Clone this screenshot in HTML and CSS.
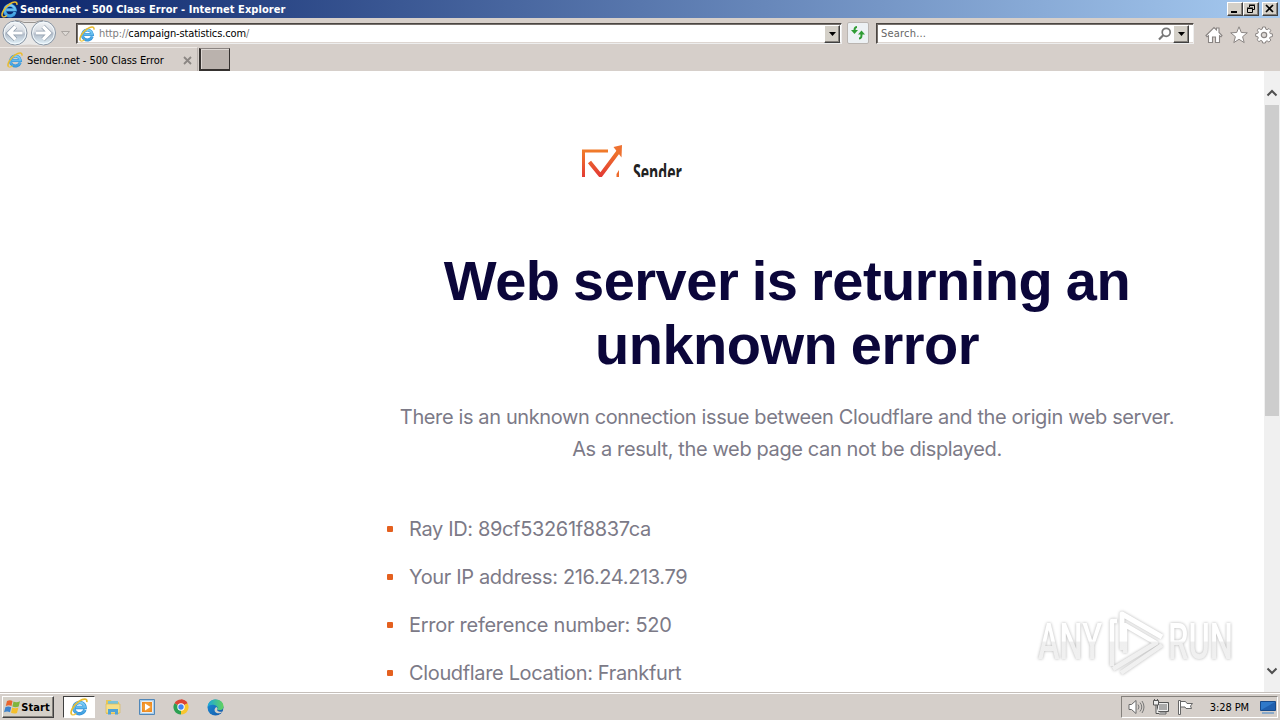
FILE: index.html
```html
<!DOCTYPE html>
<html lang="en">
<head>
<meta charset="utf-8">
<title>Sender.net - 500 Class Error</title>
<link rel="stylesheet" href="styles.css">
</head>
<body>
<svg class="defs" width="0" height="0">
  <defs>
    <linearGradient id="blue" x1="0" y1="0" x2="0" y2="1"><stop offset="0" stop-color="#7fd0f7"/><stop offset="1" stop-color="#3f9fe0"/></linearGradient>
    <linearGradient id="orb" x1="0" y1="0" x2="0" y2="1"><stop offset="0" stop-color="#f4f5f7"/><stop offset=".45" stop-color="#d5dae1"/><stop offset=".55" stop-color="#b3bdca"/><stop offset="1" stop-color="#e6f6fd"/></linearGradient>
    <linearGradient id="sender" x1="0" y1="0" x2="0" y2="1"><stop offset="0" stop-color="#f07a2a"/><stop offset="1" stop-color="#e33b34"/></linearGradient>
    <linearGradient id="edge" x1="0" y1="0" x2="1" y2="1"><stop offset="0" stop-color="#1b8fd8"/><stop offset="1" stop-color="#1557a8"/></linearGradient>
    <linearGradient id="edgeTop" x1="0" y1="0" x2="1" y2="0"><stop offset="0" stop-color="#1aa7dd"/><stop offset="1" stop-color="#62d35c"/></linearGradient>
    <linearGradient id="mark" gradientUnits="userSpaceOnUse" x1="0" y1="6" x2="0" y2="66"><stop offset="0" stop-color="#fff"/><stop offset=".5" stop-color="#fff"/><stop offset=".52" stop-color="#efefef"/><stop offset="1" stop-color="#f1f1f1"/></linearGradient>
    <symbol id="ie" viewBox="0 0 16 16">
      <path d="M13.2 10.5A5 5 0 1 1 13.4 8.4H5" fill="none" stroke="#3390d6" stroke-width="3"/>
      <path d="M13.2 10.5A5 5 0 1 1 13.4 8.4H5" fill="none" stroke="url(#blue)" stroke-width="2"/>
      <path d="M1.6 14.8C-.6 12.4 3.4 6 8.2 2.8 11.8.4 15.6.1 14.9 3.6" fill="none" stroke="#e9bb2d" stroke-width="1.5"/>
      <path d="M1.6 14.8C3 15.5 4.700 14.400 5.600 13.700" fill="none" stroke="#f0c640" stroke-width="1.2"/>
    </symbol>
  </defs>
</svg>

<div class="screen">
  <header class="titlebar">
    <svg class="title-icon" width="17" height="17"><use href="#ie"/></svg>
    <span class="title-text">Sender.net - 500 Class Error - Internet Explorer</span>
    <div class="window-buttons">
      <span class="button3d win"><svg width="14" height="12"><path d="M3 9h6" stroke="#000" stroke-width="2"/></svg></span>
      <span class="button3d win restore"><svg width="14" height="12"><path d="M5.5 4V2.5h5v4H9M5 2h6M3.5 5.5h5v4h-5zM3 5h6" fill="none" stroke="#000"/></svg></span>
      <span class="button3d win"><svg width="14" height="12"><path d="M3 2l7 7M10 2l-7 7" stroke="#000" stroke-width="1.7"/></svg></span>
    </div>
  </header>

  <nav class="navbar">
    <svg class="history" width="72" height="29" viewBox="0 0 72 29">
      <path d="M15 2Q29 5 43 2L56 15 43 28Q29 25 15 28L3 15z" fill="#e9e8e7"/>
      <path d="M15 2.500Q20 2.500 24 4.500H35Q39 2.500 43 2.500" fill="none" stroke="#979390"/>
      <circle cx="15" cy="15" r="12" fill="url(#orb)" stroke="#8b97a5"/>
      <circle cx="15" cy="15" r="10.800" fill="none" stroke="#f3fafd"/>
      <circle cx="43.500" cy="15" r="12" fill="url(#orb)" stroke="#8b97a5"/>
      <circle cx="43.500" cy="15" r="10.800" fill="none" stroke="#f3fafd"/>
      <path d="M15.500 8.500L9 15l6.500 6.500M9.500 15H22.500" fill="none" stroke="#8f9dac" stroke-width="4.600"/>
      <path d="M15.500 8.500L9 15l6.500 6.500M9.500 15H22.500" fill="none" stroke="#fff" stroke-width="3.200"/>
      <path d="M43 8.500l6.500 6.500-6.500 6.500M49 15H36" fill="none" stroke="#8f9dac" stroke-width="4.600"/>
      <path d="M43 8.500l6.500 6.500-6.500 6.500M49 15H36" fill="none" stroke="#fff" stroke-width="3.200"/>
      <path d="M61.500 13.500h8l-4 4.500z" fill="#dedad6" stroke="#aaa5a1"/>
    </svg>
    <div class="field address">
      <svg width="16" height="16"><use href="#ie"/></svg>
      <span class="url">http://<b>campaign-statistics.com</b>/</span>
      <span class="button3d drop"><svg width="7" height="4"><path d="M0 0h7L3.500 4z"/></svg></span>
    </div>
    <span class="refresh"><svg width="18" height="18" viewBox="0 0 18 18"><path d="M8 3C5.500 3 5.500 5 5.500 8M10 14.500c2.500 0 2.500-2 2.500-5" fill="none" stroke="#2f9c34" stroke-width="2"/><path d="M2 6h7l-3.500 4zM9 10.500h7l-3.500-4z" fill="#2f9c34"/></svg></span>
    <div class="field search">
      <span class="placeholder">Search...</span>
      <svg width="16" height="16" viewBox="0 0 16 16"><circle cx="9.200" cy="6.300" r="4" fill="none" stroke="#777" stroke-width="1.700"/><path d="M6.200 9.300L2 13.500" stroke="#777" stroke-width="2.200"/></svg>
      <span class="button3d drop"><svg width="7" height="4"><path d="M0 0h7L3.500 4z"/></svg></span>
    </div>
    <div class="tools">
      <svg width="18" height="18" viewBox="0 0 18 18"><path d="M1 9.500L9 1.500l2.500 2.500V2h2.500v4.500l3 3-1 1.200-1.500-1V16.500h-4V11H7.500v5.500h-4V9.700l-1.500 1z" fill="#fff" stroke="#8a8583" stroke-width="1.100"/></svg>
      <svg width="18" height="18" viewBox="0 0 18 18"><path d="M9 .8l2.300 5.700 6 .3-4.700 3.900 1.600 5.900L9 13.300l-5.200 3.300 1.600-5.900L.7 6.800l6-.3z" fill="#fff" stroke="#8a8583"/></svg>
      <svg width="18" height="18" viewBox="0 0 18 18"><path d="M7.600 1h2.800l.4 2.200 1.300.5L14 2.500l1.800 1.800-1.100 1.900.5 1.400 2.200.3v2.700l-2.200.4-.6 1.300 1.300 1.800-2 1.900-1.800-1.200-1.300.6L10.400 17H7.600l-.4-2-1.400-.6L4 15.700l-1.900-1.900 1.200-1.800-.5-1.300L.7 10.300V7.700l2.100-.4.6-1.300-1.300-1.800L4 2.400l1.800 1.200 1.400-.5z" fill="#fff" stroke="#8a8583"/><circle cx="9" cy="9" r="2.700" fill="#ddd9d6" stroke="#8a8583" stroke-width="1.200"/></svg>
    </div>
  </nav>

  <div class="tabs">
    <div class="tab">
      <svg width="16" height="16"><use href="#ie"/></svg>
      <span class="tab-text">Sender.net - 500 Class Error</span>
      <svg width="9" height="9"><path d="M1 1l7 7M8 1L1 8" stroke="#8b8683" stroke-width="1.800"/></svg>
    </div>
    <div class="new-tab"></div>
  </div>

  <div class="viewport">
    <main class="page">
      <svg class="logo" width="104" height="32" viewBox="0 0 104 32">
        <path d="M26 6H1.500V32" fill="none" stroke="url(#sender)" stroke-width="3"/>
        <path d="M7.500 17L18.500 30.500 37.500 5" fill="none" stroke="url(#sender)" stroke-width="4"/>
        <path d="M31.500 2L40 0 39.500 12.500z" fill="#ee7130"/>
        <path d="M34.500 32v-3l2.500-4v7z" fill="#ed6b2c"/>
        <text class="logo-text" x="51" y="36" textLength="49" lengthAdjust="spacingAndGlyphs">Sender</text>
      </svg>
      <h1>Web server is returning an<br>unknown error</h1>
      <p class="lead">There is an unknown connection issue between Cloudflare and the origin web server.<br>As a result, the web page can not be displayed.</p>
      <ul>
        <li>Ray ID: 89cf53261f8837ca</li>
        <li>Your IP address: 216.24.213.79</li>
        <li class="reference-number">Error reference number: 520</li>
        <li>Cloudflare Location: Frankfurt</li>
      </ul>
    </main>
    <div class="scrollbar">
      <svg width="16" height="12"><path d="M3.500 8.500L8 4l4.500 4.500" fill="none" stroke="#505050" stroke-width="2"/></svg>
      <div class="track"><div class="thumb"></div></div>
      <svg width="16" height="12"><path d="M3.500 3.500L8 8l4.500-4.500" fill="none" stroke="#505050" stroke-width="2"/></svg>
    </div>
    <svg class="watermark" width="220" height="74" viewBox="0 0 220 74">
      <g class="mark">
        <text x="8" y="54" textLength="64" lengthAdjust="spacingAndGlyphs">ANY</text>
        <text x="138" y="54" textLength="65" lengthAdjust="spacingAndGlyphs">RUN</text>
        <path d="M92 45V9l40 23" fill="none" stroke="url(#mark)" stroke-width="5" stroke-linejoin="round"/>
        <path d="M82 61V16h5M95 48V20l31 18-43 26M91 68l41-28" fill="none" stroke="url(#mark)" stroke-width="4.500" stroke-linejoin="round"/>
      </g>
    </svg>
  </div>

  <footer class="taskbar">
    <div class="button3d start">
      <svg width="17" height="16" viewBox="0 0 17 16"><path d="M3 2Q6 .5 8.500 2L7.500 7Q5 5.500 1.800 7z" fill="#e9642c"/><path d="M9.500 2.500Q12.500 4 16 2.200L14.700 7.500Q11.500 9 8.400 7.500z" fill="#7fb53c"/><path d="M1.500 8Q4.500 6.700 7.200 8.200L6 13.300Q3.500 12 0 13.200z" fill="#3d82cc"/><path d="M8.200 8.500Q11 10 14.400 8.500L13 14Q10 15.200 7 13.700z" fill="#f4bf2d"/></svg>
      <span>Start</span>
    </div>
    <div class="task active"><svg width="18" height="18"><use href="#ie"/></svg></div>
    <div class="task"><svg width="16" height="16" viewBox="0 0 16 16"><path d="M1 1h5l1 2h7v12H1z" fill="#e6c75a"/><path d="M3 2h10v7H3z" fill="#7ac3d8"/><path d="M1 5h14v9H1z" fill="#f5df88" stroke="#d8b64d" stroke-width=".6"/><path d="M3 15.500V10h10v5.500h-3V13H6v2.500z" fill="#4fa3d6"/></svg></div>
    <div class="task"><svg width="16" height="16" viewBox="0 0 16 16"><path d="M.5.5h15v15H.5z" fill="#a8cdea" stroke="#5187b8"/><path d="M2.500 2.500h11v11h-11z" fill="#ee8b22" stroke="#e8edf1"/><circle cx="8" cy="8" r="4.700" fill="#f29a32"/><path d="M6 4.500v7L11.500 8z" fill="#fff"/></svg></div>
    <div class="task"><svg width="16" height="16" viewBox="0 0 16 16"><path d="M8 8L1.500 4.200A7.500 7.500 0 0 1 14.500 4.200z" fill="#dc4535"/><path d="M8 8V.5A7.500 7.500 0 0 1 14.500 4.200H8z" fill="#dc4535"/><path d="M8 8L14.500 4.200A7.500 7.500 0 0 1 8 15.500z" fill="#f8c62e"/><path d="M8 8v7.500A7.500 7.500 0 0 1 1.500 4.200z" fill="#2ca052"/><circle cx="8" cy="8" r="3.700" fill="#fff"/><circle cx="8" cy="8" r="2.700" fill="#4285f4"/></svg></div>
    <div class="task"><svg width="17" height="17" viewBox="0 0 17 17"><circle cx="8.500" cy="8.500" r="8" fill="url(#edge)"/><path d="M.6 8C1 3 4.500.5 8.500.5c5 0 8 3.200 8 7 0 3-2.500 4-5.200 3.500-1.700-.3-1-1-.7-2C10.800 6 3.500 4 .6 8z" fill="url(#edgeTop)"/><path d="M10.500 9.500c-1.500 2.500 2 4 5.200 3-1.500 2.500-7 2.500-8-.5-.6-2 .8-3.500 1.800-4z" fill="#d4d0c8"/></svg></div>
    <div class="tray">
      <svg width="17" height="16" viewBox="0 0 17 16"><path d="M1 5.500h2.500L8 1.500v13L3.500 10.500H1z" fill="#fff" stroke="#686868"/><path d="M10 5.500q2 2.500 0 5M12 3.500q3.500 4.500 0 9M14 2q4 6 0 12" fill="none" stroke="#777"/></svg>
      <svg width="18" height="17" viewBox="0 0 18 17"><path d="M5.500 3.500h11v9h-11z" fill="#aaa" stroke="#555"/><path d="M6.500 4.500h9v7h-9z" fill="none" stroke="#eee"/><path d="M8 13h6v2H7" fill="#ddd" stroke="#666"/><path d="M1.500 1.500h5V6h-5zM4 6v8.500h3M2.500 0v2M5.500 0v2" fill="#eee" stroke="#555"/></svg>
      <svg width="17" height="16" viewBox="0 0 17 16"><path d="M1.500 1.500h2v14h-2zM3.500 2.500h5l1.500 2h5.500L13.500 7l1 2.500H9l-1-1.500H3.500z" fill="#fff" stroke="#666"/></svg>
      <span class="clock">3:28 PM</span>
      <svg width="16" height="16" viewBox="0 0 16 16"><path d="M.5 2.500h15v9H.5z" fill="#2f79c9" stroke="#174a8a"/><path d="M1 11L15 3v8z" fill="#1f5fae"/><path d="M2 14h12" stroke="#89a9c9" stroke-width="2"/></svg>
    </div>
  </footer>
</div>
</body>
</html>
```
FILE: styles.css
```css
* { box-sizing: border-box; }
body { margin: 0; background: #d6cfca; }
.defs { position: absolute; }
svg { display: block; flex: none; }

.screen {
  display: flex;
  flex-direction: column;
  width: 1280px;
  height: 720px;
  overflow: hidden;
  font: 11px/14px "DejaVu Sans Condensed", "DejaVu Sans", sans-serif;
  font-stretch: condensed;
  color: #000;
  white-space: nowrap;
}

.titlebar {
  display: flex;
  align-items: center;
  height: 18px;
  padding: 0 2px 0 1px;
  background: linear-gradient(90deg, #0a246a, #a6caf0);
  color: #fff;
}
.title-text { margin-left: 2px; padding-top: 1px; font-weight: bold; letter-spacing: .05px; }
.window-buttons { display: flex; margin-left: auto; }
.button3d {
  display: flex;
  align-items: center;
  justify-content: center;
  background: #d4d0c8;
  border: 1px solid;
  border-color: #fff #404040 #404040 #fff;
  box-shadow: inset -1px -1px #85817c;
}
.win { width: 16px; height: 14px; }
.restore { margin-right: 3px; }

.navbar { display: flex; height: 29px; }
.field {
  display: flex;
  align-items: center;
  height: 21px;
  margin-top: 5px;
  background: #fff;
  border: 1px solid;
  border-color: #4b4642 #eee #eee #4b4642;
  box-shadow: inset 1px 1px #77716d, inset 0 -1px #ddd6d1;
}
.address { width: 766px; margin-left: 4px; padding: 0 1px 0 2px; }
.url { margin-left: 4px; padding-top: 1px; color: #7d7d7d; letter-spacing: -.14px; }
.url b { font-weight: normal; color: #000; }
.drop { width: 16px; height: 18px; }
.address .drop { margin-left: auto; }
.refresh {
  display: flex;
  align-items: center;
  justify-content: center;
  width: 22px;
  height: 22px;
  margin: 4px 0 0 5px;
  background: #edf1f4;
  border: 1px solid #bab5b1;
  border-radius: 2px;
}
.search { width: 318px; margin-left: 7px; padding: 0 4px 0 4px; }
.placeholder { color: #666; margin-right: auto; padding-top: 1px; letter-spacing: .2px; }
.tools { display: flex; gap: 7px; margin: 8px 0 0 11px; }

.tabs { display: flex; height: 24px; }
.tab {
  display: flex;
  align-items: center;
  width: 198px;
  padding: 1px 5px 0 7px;
  border-top: 1px solid #eee9e5;
  border-right: 1px solid #b7b0ac;
}
.tab-text { margin: 1px auto 0 4px; letter-spacing: -.07px; }
.new-tab {
  width: 31px;
  height: 23px;
  margin: 1px 0 0 1px;
  background: #bab2ad;
  border: solid #35312f;
  border-width: 1px 1px 2px 2px;
  border-top-color: #8c8582;
  box-shadow: inset 1px 1px #ddd7d3;
}

.viewport { position: relative; display: flex; height: 621px; background: #fff; }
.page {
  flex: 1;
  padding: 74px 77px 0 387px;
  font-family: Inter, "Liberation Sans", sans-serif;
  font-stretch: normal;
}
.logo { margin-left: 195px; }
.logo-text { font: bold 24px "Open Sans", sans-serif; fill: #222; }
h1 {
  margin: 72px 0 0;
  font: bold 56px/64px "Liberation Sans", Arial, sans-serif;
  text-align: center;
  color: #0b063a;
  letter-spacing: -.5px;
  word-spacing: -1.500px;
}
.lead {
  margin: 24px 0 0;
  font-size: 20px;
  line-height: 32px;
  text-align: center;
  color: #7c7a87;
  letter-spacing: -.38px;
}
ul { margin: 48px 0 0; padding: 0; list-style: none; }
li {
  display: flex;
  align-items: center;
  height: 32px;
  margin-bottom: 16px;
  font-size: 20px;
  line-height: 32px;
  color: #7c7a87;
  letter-spacing: -.35px;
}
li:last-child { margin-bottom: 0; }
.reference-number { letter-spacing: -.27px; }
li::before { content: ""; width: 6px; height: 6px; margin-right: 16px; background: #e4601f; border-radius: 1px; }

.scrollbar {
  display: flex;
  flex-direction: column;
  width: 16px;
  padding: 16px 0 15px;
  background: #f0f0f0;
}
.track { flex: 1; padding-top: 6px; }
.thumb { height: 311px; margin: 0 1px; background: #cdcdcd; }

.watermark {
  position: absolute;
  left: 1030px;
  top: 534px;
}
.mark { filter: drop-shadow(0 0 1.5px #b4b4b4); }
.mark text { font: 500 50px Roboto, sans-serif; fill: url(#mark); }

.taskbar {
  display: flex;
  align-items: center;
  height: 28px;
  padding: 1px 2px 0;
  border-top: 1px solid #c5bfba;
  background: #d5cfca;
  box-shadow: inset 0 1px #fff;
}
.start { width: 52px; height: 22px; padding-right: 2px; font-weight: bold; letter-spacing: .1px; }
.start span { padding-top: 1px; }
.task {
  display: flex;
  align-items: center;
  justify-content: center;
  width: 32px;
  height: 22px;
  margin-right: 2px;
}
.active {
  margin-left: 9px;
  background: #fff;
  border: 1px solid;
  border-color: #404040 #fff #fff #404040;
}
.tray {
  display: flex;
  align-items: center;
  width: 157px;
  height: 22px;
  margin-left: auto;
  padding: 0 1px 0 6px;
  gap: 7px;
  border: 1px solid;
  border-color: #85817c #fff #fff #85817c;
}
.clock { margin: 0 4px 0 auto; padding-top: 1px; letter-spacing: -.1px; }
```
